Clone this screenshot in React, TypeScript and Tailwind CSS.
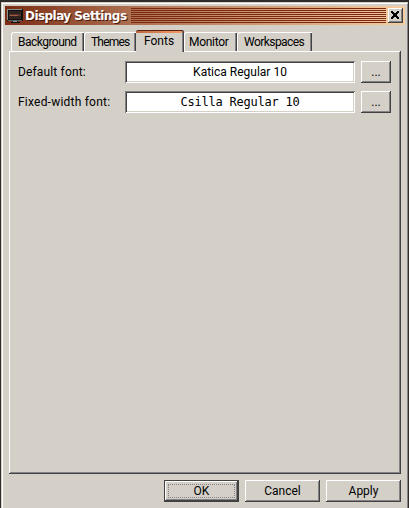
import type { ReactNode } from "react";

const raised =
  "shadow-[inset_-1px_-1px_#424242,inset_1px_1px_#ffffff,inset_-2px_-2px_#848284]";
const sunken =
  "shadow-[inset_1px_1px_#848284,inset_-1px_-1px_#ffffff,inset_2px_2px_#424242,inset_-2px_-2px_#d4d0c8]";

function Label({ children, className = "" }: { children: ReactNode; className?: string }) {
  return <span className={`block whitespace-pre ${className}`}>{children}</span>;
}

function Tab({ children, className = "" }: { children: ReactNode; className?: string }) {
  return (
    <div
      className={`mt-[2px] flex h-[19px] items-center rounded-tl-[3px] border-l border-t border-white shadow-[inset_-1px_0_#424242,inset_-2px_0_#848284] ${className}`}
    >
      {children}
    </div>
  );
}

function FontRow({ label, value }: { label: ReactNode; value: ReactNode }) {
  return (
    <div className="flex h-[22px] items-center">
      <div className="w-[107px]">{label}</div>
      <div className={`flex h-[22px] w-[230px] items-center justify-center bg-white ${sunken}`}>{value}</div>
      <button className={`ml-[6px] h-[22px] w-[30px] ${raised}`}>...</button>
    </div>
  );
}

function Monitor() {
  return (
    <svg width="16" height="16" viewBox="0 0 16 16" shapeRendering="crispEdges">
      <path fill="#101010" d="M0 1h16v12H0z" />
      <path fill="#8a9494" d="M0 1h15v1H0zM0 1h1v11H0z" />
      <path fill="#30221e" d="M2 3h12v8H2z" />
      <path fill="#51382e" d="M2 6h12v2H2z" />
      <path fill="#a75a3d" d="M3 7h8v1H3z" />
      <path fill="#536060" d="M1 12h14v1H1z" />
      <path fill="#101010" d="M5 13h6v1H5zM4 14h9v1H4z" />
      <path fill="#8a9494" d="M6 13h4v1H6z" />
    </svg>
  );
}

export default function App() {
  return (
    <div className="h-[508px] w-[409px] overflow-hidden bg-[#302c2a] pl-px pt-[2px] font-[Roboto,sans-serif] text-[12px] leading-[14px] text-black">
      <div className="h-[506px] w-[407px] border-l border-t border-[#d4d0c8] bg-[#d4d0c8]">
        <div className="h-[505px] border-l border-t border-r border-white border-r-[#848284] pl-[2px] pt-[2px]">
          <header className="flex h-[19px] w-[400px] items-center bg-[linear-gradient(90deg,#7b2d13_0%,#ad7051_32%,#d09b75_65%,#f7cda3_100%)] pl-[2px]">
            <Monitor />
            <h1 className="ml-[2px] w-[106px] whitespace-pre font-['DejaVu_Sans'] text-[12px] font-bold tracking-[-0.55px] text-white [text-shadow:1px_1px_#4a1808]">
              Display Settings
            </h1>
            <div className="h-[15px] w-[255px] bg-[repeating-linear-gradient(180deg,#7b2810_0px,#7b2810_1px,transparent_1px,transparent_2px)]" />
            <button className={`ml-[2px] flex h-[15px] w-[15px] items-start bg-[#d4d0c8] pl-[3px] pt-[3px] ${raised}`}>
              <svg width="8" height="8" viewBox="0 0 8 8" shapeRendering="crispEdges">
                <path d="M0 0h2v1h1v1h2V1h1V0h2v2H7v1H6v2h1v1h1v2H6V7H5V6H3v1H2v1H0V6h1V5h1V3H1V2H0z" />
              </svg>
            </button>
          </header>
          <nav className="ml-[6px] mt-[5px] flex h-[21px]">
            <Tab className="w-[73px] pl-[6px]">
              <Label className="tracking-[-0.52px]">Background</Label>
            </Tab>
            <Tab className="w-[52px] pl-[6px]">
              <Label className="tracking-[-0.8px]">Themes</Label>
            </Tab>
            <div className="flex h-[22px] w-[48px] items-start rounded-t-[2px] border-t border-[#5a2411] bg-[#d4d0c8] bg-[linear-gradient(90deg,#bd6841,#f79e6b)] bg-[length:100%_2px] bg-no-repeat pl-[8px] pt-[3px] shadow-[inset_-1px_0_#424242,inset_-2px_0_#848284]">
              <Label>Fonts</Label>
            </div>
            <Tab className="w-[53px] pl-[4px]">
              <Label className="tracking-[-0.3px]">Monitor</Label>
            </Tab>
            <Tab className="w-[75px] pl-[6px]">
              <Label className="tracking-[-0.55px]">Workspaces</Label>
            </Tab>
          </nav>
          <main className={`ml-[4px] flex h-[423px] w-[392px] flex-col gap-[8px] pl-[9px] pt-[10px] ${raised}`}>
            <FontRow
              label={<Label className="tracking-[0.15px]">Default font:</Label>}
              value={<Label>Katica Regular 10</Label>}
            />
            <FontRow
              label={<Label className="tracking-[0.22px]">Fixed-width font:</Label>}
              value={<Label className="font-['DejaVu_Sans_Mono',monospace] text-[12px] tracking-[-0.22px]">Csilla Regular 10</Label>}
            />
          </main>
          <footer className="ml-[159px] mt-[6px] flex gap-[6px]">
            <button className={`h-[22px] w-[75px] border border-[#424242] p-[3px] ${raised}`}>
              <span className="flex h-[14px] items-center justify-center border border-dotted border-[#848284]">OK</span>
            </button>
            <button className={`h-[22px] w-[75px] ${raised}`}>Cancel</button>
            <button className={`h-[22px] w-[75px] ${raised}`}>Apply</button>
          </footer>
        </div>
      </div>
    </div>
  );
}
